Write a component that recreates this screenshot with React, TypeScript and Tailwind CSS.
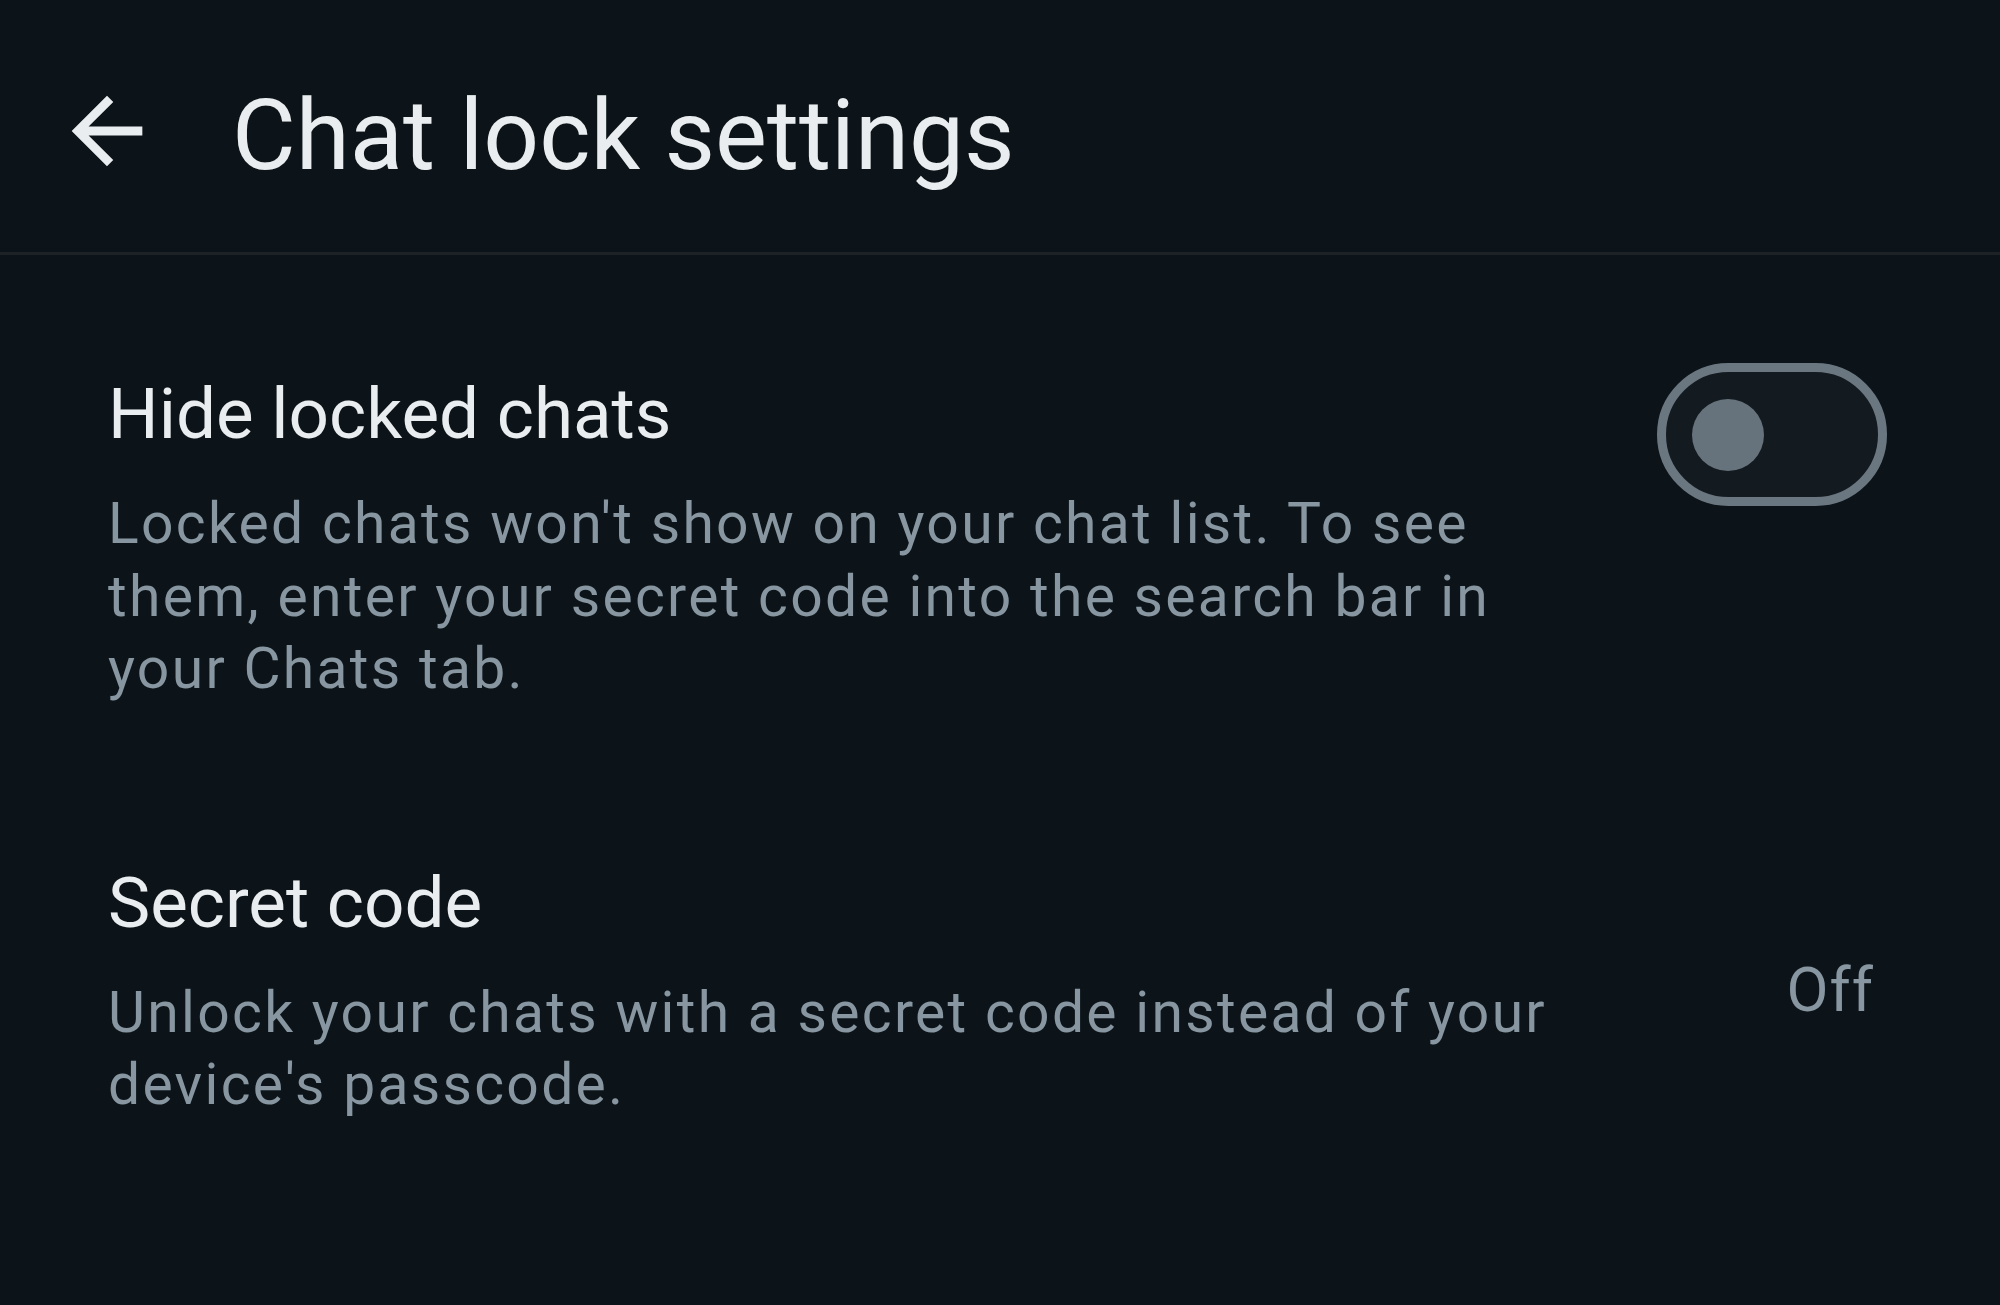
import React from "react";

export default function App() {
  return (
    <div className="w-[2000px] h-[1305px] bg-[#0c1419] font-['Roboto',sans-serif] overflow-hidden">
      <div className="flex items-start h-[255px] border-b-[3px] border-[#1c2226]">
        <svg
          viewBox="0 0 24 24"
          className="ml-[54px] mt-[78px] w-[106px] h-[106px] shrink-0"
          fill="#e9edef"
        >
          <path d="M20 11H7.83l5.59-5.59L12 4l-8 8 8 8 1.41-1.41L7.83 13H20v-2z" />
        </svg>
        <div className="ml-[72px] mt-[77px] text-[98px] leading-[118px] text-[#e9edef]">
          Chat lock settings
        </div>
      </div>

      <div className="flex items-start pt-[108px] pl-[108px] pr-[113px]">
        <div className="w-[1472px] pt-[8px]">
          <div className="text-[71px] leading-[86px] text-[#e9edef]">Hide locked chats</div>
          <div className="mt-[31px] text-[57px] leading-[72.5px] tracking-[2.3px] text-[#8796a0]">
            Locked chats won't show on your chat list. To see them, enter your secret code into the search bar in your Chats tab.
          </div>
        </div>
        <div className="ml-auto w-[230px] h-[143px] rounded-full border-[9px] border-[#6b7780] bg-[#131a20] flex items-center pl-[26px] shrink-0">
          <div className="w-[72px] h-[72px] rounded-full bg-[#67737c]" />
        </div>
      </div>

      <div className="flex items-center pt-[154px] pl-[108px] pr-[126px]">
        <div className="w-[1472px]">
          <div className="text-[71px] leading-[86px] text-[#e9edef]">Secret code</div>
          <div className="mt-[31px] text-[57px] leading-[72.5px] tracking-[2.3px] text-[#8796a0]">
            Unlock your chats with a secret code instead of your device's passcode.
          </div>
        </div>
        <div className="ml-auto text-[61px] tracking-[1px] text-[#8796a0]">Off</div>
      </div>
    </div>
  );
}
